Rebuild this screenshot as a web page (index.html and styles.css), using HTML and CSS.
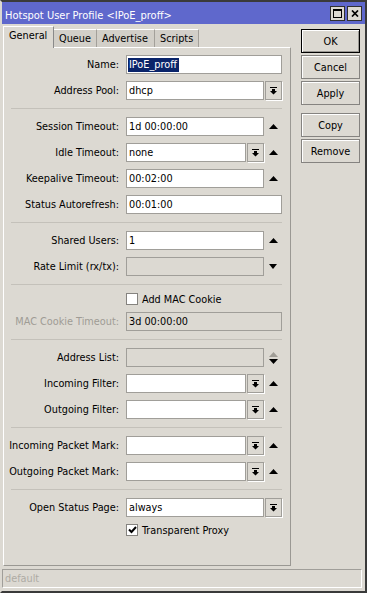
FILE: index.html
```html
<!DOCTYPE html>
<html>
<head>
<meta charset="utf-8">
<link rel="stylesheet" href="styles.css">
</head>
<body>
<div class="window">
  <div class="titlebar">
    <span class="title">Hotspot User Profile &lt;IPoE_proff&gt;</span>
    <div class="tbtns">
      <span class="tbtn"><svg width="9" height="9" viewBox="0 0 9 9"><path d="M0 0h9v9H0z M1 2v6h7V2z" fill-rule="evenodd" fill="#000"/></svg></span>
      <span class="tbtn"><svg width="8" height="7" viewBox="0 0 8 7"><path d="M1 0.5l6 6M7 0.5l-6 6" stroke="#000" stroke-width="1.7" fill="none"/></svg></span>
    </div>
  </div>
  <div class="main">
    <div class="leftcol">
      <div class="tabs">
        <span class="tab active t-general">General</span>
        <span class="tab t-queue">Queue</span>
        <span class="tab t-adv">Advertise</span>
        <span class="tab t-scripts">Scripts</span>
      </div>
      <div class="panel">
        <div class="section first">
          <div class="row"><span class="label">Name:</span><div class="ctl"><div class="box"><span class="sel">IPoE_proff</span></div></div></div>
          <div class="row"><span class="label">Address Pool:</span><div class="ctl"><div class="box">dhcp</div><span class="dd"><svg width="7" height="8" viewBox="0 0 7 8"><path d="M0 0h7v1H0z M2 2h3v2H2z M0 4h7L3.5 7.5z" fill="#000"/></svg></span></div></div>
        </div>
        <div class="section">
          <div class="row"><span class="label">Session Timeout:</span><div class="ctl"><div class="box">1d 00:00:00</div><span class="arrow"><svg width="9" height="5" viewBox="0 0 9 5"><path d="M4.5 0L9 5H0z" fill="#000"/></svg></span></div></div>
          <div class="row"><span class="label">Idle Timeout:</span><div class="ctl"><div class="box">none</div><span class="dd"><svg width="7" height="8" viewBox="0 0 7 8"><path d="M0 0h7v1H0z M2 2h3v2H2z M0 4h7L3.5 7.5z" fill="#000"/></svg></span><span class="arrow"><svg width="9" height="5" viewBox="0 0 9 5"><path d="M4.5 0L9 5H0z" fill="#000"/></svg></span></div></div>
          <div class="row"><span class="label">Keepalive Timeout:</span><div class="ctl"><div class="box">00:02:00</div><span class="arrow"><svg width="9" height="5" viewBox="0 0 9 5"><path d="M4.5 0L9 5H0z" fill="#000"/></svg></span></div></div>
          <div class="row"><span class="label">Status Autorefresh:</span><div class="ctl"><div class="box">00:01:00</div></div></div>
        </div>
        <div class="section">
          <div class="row"><span class="label">Shared Users:</span><div class="ctl"><div class="box">1</div><span class="arrow"><svg width="9" height="5" viewBox="0 0 9 5"><path d="M4.5 0L9 5H0z" fill="#000"/></svg></span></div></div>
          <div class="row"><span class="label">Rate Limit (rx/tx):</span><div class="ctl"><div class="box disabled"></div><span class="arrow"><svg width="8" height="5" viewBox="0 0 8 5"><path d="M0 0h8L4 5z" fill="#000"/></svg></span></div></div>
        </div>
        <div class="section">
          <div class="row cbrow"><span class="label"></span><div class="ctl"><span class="cb"></span><span class="cbtext">Add MAC Cookie</span></div></div>
          <div class="row"><span class="label dim">MAC Cookie Timeout:</span><div class="ctl"><div class="box disabled">3d 00:00:00</div></div></div>
        </div>
        <div class="section">
          <div class="row"><span class="label">Address List:</span><div class="ctl"><div class="box disabled"></div><span class="arrow updown"><svg width="9" height="12" viewBox="0 0 9 12"><path d="M4.5 0L9 5H0z" fill="#a09d96"/><path d="M0 7h9L4.5 12z" fill="#000"/></svg></span></div></div>
          <div class="row"><span class="label">Incoming Filter:</span><div class="ctl"><div class="box"></div><span class="dd"><svg width="7" height="8" viewBox="0 0 7 8"><path d="M0 0h7v1H0z M2 2h3v2H2z M0 4h7L3.5 7.5z" fill="#000"/></svg></span><span class="arrow"><svg width="9" height="5" viewBox="0 0 9 5"><path d="M4.5 0L9 5H0z" fill="#000"/></svg></span></div></div>
          <div class="row"><span class="label">Outgoing Filter:</span><div class="ctl"><div class="box"></div><span class="dd"><svg width="7" height="8" viewBox="0 0 7 8"><path d="M0 0h7v1H0z M2 2h3v2H2z M0 4h7L3.5 7.5z" fill="#000"/></svg></span><span class="arrow"><svg width="9" height="5" viewBox="0 0 9 5"><path d="M4.5 0L9 5H0z" fill="#000"/></svg></span></div></div>
        </div>
        <div class="section">
          <div class="row"><span class="label">Incoming Packet Mark:</span><div class="ctl"><div class="box"></div><span class="dd"><svg width="7" height="8" viewBox="0 0 7 8"><path d="M0 0h7v1H0z M2 2h3v2H2z M0 4h7L3.5 7.5z" fill="#000"/></svg></span><span class="arrow"><svg width="9" height="5" viewBox="0 0 9 5"><path d="M4.5 0L9 5H0z" fill="#000"/></svg></span></div></div>
          <div class="row"><span class="label">Outgoing Packet Mark:</span><div class="ctl"><div class="box"></div><span class="dd"><svg width="7" height="8" viewBox="0 0 7 8"><path d="M0 0h7v1H0z M2 2h3v2H2z M0 4h7L3.5 7.5z" fill="#000"/></svg></span><span class="arrow"><svg width="9" height="5" viewBox="0 0 9 5"><path d="M4.5 0L9 5H0z" fill="#000"/></svg></span></div></div>
        </div>
        <div class="section">
          <div class="row"><span class="label">Open Status Page:</span><div class="ctl"><div class="box">always</div><span class="dd"><svg width="7" height="8" viewBox="0 0 7 8"><path d="M0 0h7v1H0z M2 2h3v2H2z M0 4h7L3.5 7.5z" fill="#000"/></svg></span></div></div>
          <div class="row cbrow"><span class="label"></span><div class="ctl"><span class="cb"><svg width="9" height="8" viewBox="0 0 9 8"><path d="M1 3.5l2.5 2.5L8 1" stroke="#000" stroke-width="2" fill="none"/></svg></span><span class="cbtext">Transparent Proxy</span></div></div>
        </div>
      </div>
    </div>
    <div class="buttons">
      <span class="btn default">OK</span>
      <span class="btn">Cancel</span>
      <span class="btn">Apply</span>
      <span class="btn spaced">Copy</span>
      <span class="btn">Remove</span>
    </div>
  </div>
  <div class="status">default</div>
</div>
</body>
</html>
```
FILE: styles.css
```css
* { box-sizing: border-box; }
html, body { margin: 0; padding: 0; }
body {
  width: 367px;
  height: 593px;
  background: #dcd9d2;
  font-family: "DejaVu Sans Condensed", "DejaVu Sans", sans-serif;
  font-size: 10.8px;
  color: #000;
  overflow: hidden;
}
.window {
  width: 367px;
  height: 593px;
  border-top: 2px solid #3a3a3a;
  border-right: 2px solid #3a3a3a;
  border-bottom: 2px solid #3a3a3a;
  border-left: 2px solid #dcd9d2;
  display: flex;
  flex-direction: column;
  background: #dcd9d2;
}
.titlebar {
  height: 22px;
  background: #5f68cc;
  display: flex;
  justify-content: space-between;
  align-items: flex-start;
  padding: 0 3px 0 3px;
}
.title {
  color: #fff;
  font-size: 11px;
  line-height: 13px;
  margin-top: 7px;
}
.tbtns {
  display: flex;
  gap: 2px;
  margin-top: 4px;
}
.tbtn {
  width: 15px;
  height: 15px;
  background: #dcd9d2;
  border: 1px solid #303030;
  display: flex;
  align-items: center;
  justify-content: center;
}
.main {
  display: flex;
  padding-left: 1px;
  gap: 10px;
}
.leftcol {
  width: 288px;
  display: flex;
  flex-direction: column;
  padding-top: 2px;
}
.tabs {
  display: flex;
  align-items: flex-end;
  height: 22px;
  margin-bottom: -1px;
}
.tab {
  height: 19px;
  background: #d2cfc8;
  border-top: 1px solid #fff;
  border-right: 1px solid #a3a09a;
  line-height: 18px;
  padding-left: 5px;
  white-space: nowrap;
}
.tab.active {
  height: 22px;
  background: #dcd9d2;
  border-left: 1px solid #fff;
  border-right: 1px solid #8a8a8a;
  padding-left: 5px;
  line-height: 17px;
  position: relative;
  z-index: 1;
}
.t-general { width: 51px; }
.t-queue { width: 43px; }
.t-adv { width: 58px; }
.t-scripts { width: 44px; }
.panel {
  height: 519px;
  border-top: 1px solid #fff;
  border-left: 1px solid #fff;
  border-right: 1px solid #9a9893;
  border-bottom: 1px solid #9a9893;
  padding: 0 8px 0 7px;
}
.section {
  display: flex;
  flex-direction: column;
  gap: 7px;
  padding: 8px 0;
  border-top: 1px solid #c4c1ba;
}
.section.first {
  border-top: none;
  padding-top: 7px;
}
.row {
  display: flex;
  align-items: center;
  height: 19px;
}
.row.cbrow { height: 12px; }
.label {
  width: 108px;
  margin-right: 7px;
  display: flex;
  justify-content: flex-end;
  white-space: nowrap;
}
.label.dim { color: #9f9c95; }
.ctl {
  width: 156px;
  height: 100%;
  display: flex;
  align-items: center;
}
.box {
  flex: 1;
  height: 19px;
  background: #fff;
  border: 1px solid #a09e99;
  padding-left: 2px;
  display: flex;
  align-items: center;
  white-space: nowrap;
  overflow: hidden;
}
.box.disabled { background: #dcd9d2; }
.sel {
  background: #0a246a;
  color: #fff;
  line-height: 14px;
  padding: 0 2px 0 1px;
  margin-left: -1px;
}
.dd {
  width: 17px;
  height: 19px;
  margin-left: 1px;
  background: #dcd9d2;
  border: 1px solid #a09e99;
  box-shadow: 1px 1px 0 #fff;
  display: flex;
  align-items: center;
  justify-content: center;
}
.arrow {
  width: 18px;
  height: 19px;
  display: flex;
  align-items: center;
  justify-content: center;
}
.cb {
  width: 12px;
  height: 12px;
  background: #fff;
  border: 1px solid #85837f;
  display: flex;
  align-items: center;
  justify-content: center;
}
.cbtext {
  margin-left: 4px;
  white-space: nowrap;
}
.buttons {
  width: 59px;
  display: flex;
  flex-direction: column;
  gap: 2px;
  margin-top: 5px;
}
.btn {
  height: 24px;
  border: 1px solid #858380;
  box-shadow: inset 1px 1px 0 #fff;
  display: flex;
  align-items: center;
  justify-content: center;
}
.btn.default {
  border: 1px solid #000;
  box-shadow: inset 1px 1px 0 #fff, inset -1px -1px 0 #9a9893;
}
.btn.spaced { margin-top: 6px; }
.status {
  margin-top: 3px;
  width: 360px;
  height: 19px;
  border-top: 1px solid #a09e99;
  border-left: 1px solid #a09e99;
  border-right: 1px solid #fff;
  border-bottom: 1px solid #fff;
  color: #aeaba4;
  padding-left: 2px;
  line-height: 17px;
}
```
